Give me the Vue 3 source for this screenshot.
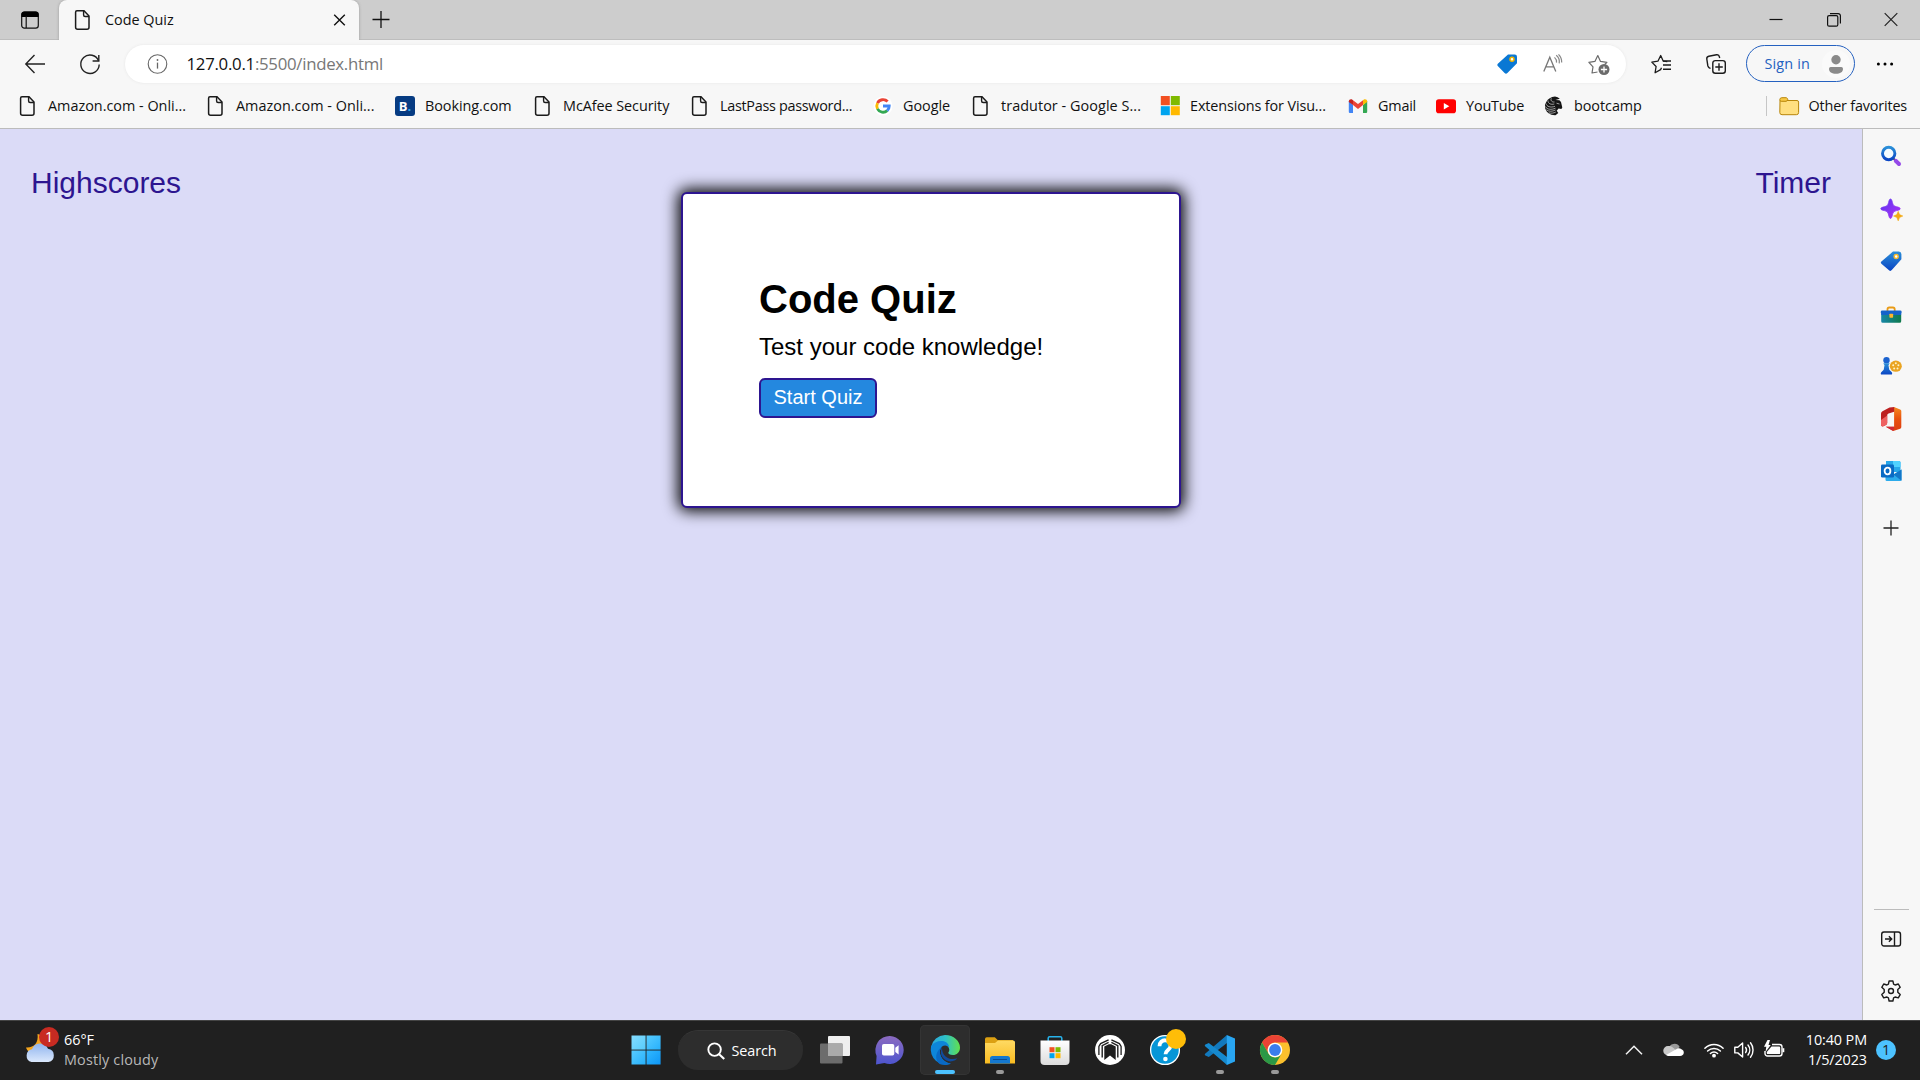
<script setup>
const doc = '<path d="M4 .8h7l5 5.2v11.2a2 2 0 0 1-2 2H4.6a2 2 0 0 1-2-2V2.2A1.4 1.4 0 0 1 4 .8z" fill="none" stroke="#1b1b1b" stroke-width="1.5"/><path d="M10.6 1v4a1.5 1.5 0 0 0 1.5 1.5H16" fill="none" stroke="#1b1b1b" stroke-width="1.4"/>'

const icons = {
  doc,
  tabs: '<rect x="1.7" y="2" width="16.6" height="16.2" rx="2.6" fill="none" stroke="#111" stroke-width="1.2"/><path d="M1.5 7V4.6A3 3 0 0 1 4.500 1.600h11a3 3 0 0 1 3 3V7z" fill="#000"/><path d="M6.200 6v12" stroke="#111" stroke-width="1.200"/>',
  close: '<path d="M4.200 4.700l10.600 10.600M14.800 4.700L4.200 15.300" stroke="#111" stroke-width="1.400"/>',
  plus: '<path d="M1.500 9.500h17M10 1v17" stroke="#111" stroke-width="1.300"/>',
  minimize: '<path d="M3.500 9.500h13" stroke="#111" stroke-width="1.200"/>',
  restore: '<rect x="3.600" y="5.600" width="10.200" height="10.600" rx="1.500" fill="none" stroke="#111" stroke-width="1.200"/><path d="M6 3.600h8.200a2.200 2.200 0 0 1 2.200 2.200V13.500" fill="none" stroke="#111" stroke-width="1.200"/>',
  winclose: '<path d="M3.700 3.200l12.600 12.600M16.300 3.200L3.700 15.800" stroke="#222" stroke-width="1.200"/>',
  back: '<path d="M20 10H1M9.500 1L.800 10l8.700 9" fill="none" stroke="#222" stroke-width="1.400"/>',
  refresh: '<path d="M18.600 7A9.200 9.200 0 1 0 19.200 10.500" fill="none" stroke="#222" stroke-width="1.400"/><path d="M18.800 1v6h-6.200" fill="none" stroke="#222" stroke-width="1.400"/>',
  info: '<circle cx="10.500" cy="10" r="9.300" fill="none" stroke="#666" stroke-width="1.100"/><path d="M10.500 8.600v6" stroke="#666" stroke-width="1.300"/><circle cx="10.500" cy="6" r=".9" fill="#666"/>',
  tag: '<path d="M11 .4h6.500A2.400 2.400 0 0 1 20 2.800v6.400L10.400 19a2 2 0 0 1-2.800 0L.8 12a1.600 1.600 0 0 1 0-2.300z" fill="#0a78d4"/><circle cx="15" cy="5.200" r="2" fill="#fff" stroke="#f0b400" stroke-width="1.500"/>',
  read: '<path d="M.8 17.600L6.800 3.200l6 14.400M2.900 12.800h7.800" fill="none" stroke="#777" stroke-width="1.300"/><path d="M11.500 3.400a6 6 0 0 1 2 5.200M13.200 1.300a8.500 8.500 0 0 1 3 8M15.500.4a11 11 0 0 1 3.200 8" fill="none" stroke="#888" stroke-width="1.200"/>',
  staradd: '<path d="M8.500 18L3 19l1-6.200L-.1 8.300l6-.9L8.800 1.600l2.700 5.800 6.400.9-2.200 2.200" fill="none" stroke="#6b6b6b" stroke-width="1.200" stroke-linejoin="round"/><circle cx="15" cy="15.500" r="5.500" fill="#6b6b6b"/><path d="M15 12.400v6.200M11.900 15.500h6.200" stroke="#fff" stroke-width="1.300"/>',
  favs: '<path d="M10.500 13.700L9.600 15.600 4.100 18.700l1-6.200L.8 8.100l6.100-.9L9.700 1.500l2.600 5.700 4 .5" fill="none" stroke="#1b1b1b" stroke-width="1.300" stroke-linejoin="round"/><path d="M12 7h8M12 11h8M12 15.200h8" stroke="#1b1b1b" stroke-width="1.400"/>',
  collect: '<rect x="6.800" y="6.600" width="12.500" height="12.700" rx="2.500" fill="none" stroke="#1b1b1b" stroke-width="1.400"/><path d="M13 9.200v7.500M9.300 13h7.500" stroke="#1b1b1b" stroke-width="1.400"/><path d="M4.500 14.500L3 13.600a3 3 0 0 1-1.200-1.900L.8 5a2.500 2.500 0 0 1 2-2.800L10.500.8a2.500 2.500 0 0 1 2.900 2l.3 1.200" fill="none" stroke="#1b1b1b" stroke-width="1.400"/>',
  dots: '<circle cx="3.400" cy="10" r="1.500"/><circle cx="10" cy="10" r="1.500"/><circle cx="16.600" cy="10" r="1.500"/>',
  google: '<circle cx="10" cy="10" r="9.500" fill="#fff"/><g fill="none" stroke-width="2.900"><path d="M14.600 5.600A6.200 6.200 0 0 0 4.500 7.100" stroke="#ea4335"/><path d="M4.500 7.100a6.300 6.300 0 0 0 0 5.800" stroke="#fbbc05"/><path d="M4.500 12.900a6.200 6.200 0 0 0 9.700 1.700" stroke="#34a853"/><path d="M10 10h6.200a6.200 6.200 0 0 1-2 4.600" stroke="#4285f4"/></g>',
  microsoft: '<path d="M.8 0h9v9.200h-9z" fill="#f25022"/><path d="M10.800 0h9v9.200h-9z" fill="#7fba00"/><path d="M.8 10.200h9v9h-9z" fill="#00a4ef"/><path d="M10.800 10.200h9v9h-9z" fill="#ffb900"/>',
  gmail: '<path d="M.8 5v10.500A1.300 1.300 0 0 0 2.100 17H5V9z" fill="#4285f4"/><path d="M19.200 5v10.500a1.300 1.300 0 0 1-1.300 1.500H15V9z" fill="#34a853"/><path d="M.8 5.300C.8 3.400 3 2.600 4.400 3.700L5 4.200V9L.8 6z" fill="#c5221f"/><path d="M19.200 5.300c0-1.900-2.200-2.700-3.600-1.600l-.6.500V9l4.200-3z" fill="#fbbc04"/><path d="M5 4.200l5 3.900 5-3.900V9l-5 4-5-4z" fill="#ea4335"/>',
  youtube: '<rect x="0" y="3.200" width="20" height="14" rx="2.800" fill="#f00"/><path d="M7.800 7v6.400l5.500-3.200z" fill="#fff"/>',
  knight: '<path d="M11 .5C7 1 3.800 2.600 2.400 5.800L1 8.600l.2 4C2.500 16.500 6 19.500 11.500 19.300l2.800-2.200-1.600-2.300 1.900-2.400 2.800.5.900-1.500-1.300-5.500-1.600-1.600-4-.3 4.400-1.200A8 8 0 0 0 11 .5z" fill="#151515"/><g fill="none" stroke="#f7f7f7" stroke-width=".6"><path d="M2 7.500c.5 3 4.500 4.500 9 2.800"/><path d="M1.300 10.500c1.800 3.200 6 3.500 10.200 1.700"/><path d="M2.300 13.800c2.500 2 6 1.800 9.200.2"/><path d="M4.800 16.800c2.300.8 4.800.4 7-.8"/><path d="M4 4.500C3.800 7.500 7 9 10.300 8"/><path d="M7.300 2.200C6.200 4.500 8 6.300 10.500 6"/><path d="M12.500 7.200l3 .8"/></g>',
  folder: '<path d="M1 4.500h17a1.600 1.600 0 0 1 1.600 1.600v10.400A2.200 2.200 0 0 1 17.400 18.700H3A2.200 2.200 0 0 1 .8 16.500z" fill="#ffdf80" stroke="#b8860b" stroke-width="1"/><path d="M.8 3.500A2 2 0 0 1 2.800 1.700h4.500l1.700 1.600L7.500 5.300H2.200A1.500 1.500 0 0 1 .8 3.500z" fill="#f8c945" stroke="#b8860b" stroke-width="1"/>',
  search: '<path d="M12.600 12.600l2.800 2.800" stroke="#444" stroke-width="2"/><path d="M14.800 14.800l3.200 3.200" stroke="#9548e8" stroke-width="4" stroke-linecap="round"/><circle cx="7.700" cy="7.500" r="6.200" fill="#f4fbff" stroke="url(#gBlue)" stroke-width="2.900"/>',
  sparkle: '<path d="M9.500 0c1 0 1.400 1.400 1.900 3.500.7 2.800 1.500 3.600 4.300 4.300 2.100.5 3.500.9 3.500 1.900s-1.400 1.400-3.500 1.900c-2.800.7-3.600 1.500-4.300 4.300-.5 2.100-.9 3.500-1.900 3.500s-1.400-1.400-1.900-3.500c-.7-2.800-1.500-3.600-4.300-4.300C1.200 11.100-.2 10.700-.2 9.700s1.400-1.400 3.500-1.900c2.800-.7 3.600-1.500 4.300-4.300C8.100 1.400 8.500 0 9.500 0z" fill="url(#gPurple)" stroke="url(#gPurple)" stroke-width=".8"/><path d="M17.200 12.300l1.400 3.300 3.300 1.400-3.300 1.500-1.400 3.400-1.400-3.400-3.300-1.500 3.300-1.400z" fill="#f3aa17" stroke="#f3aa17" stroke-width=".5"/>',
  tag3d: '<path d="M12 .6l5.800-.1A2.600 2.600 0 0 1 20.400 3v5.200l-9.600 10.900a2 2 0 0 1-2.800.2L.4 12.700a1.500 1.500 0 0 1 0-2.200z" fill="url(#gBlue)"/><circle cx="15.200" cy="5.400" r="2" fill="#fff" stroke="#f5b92e" stroke-width="1.500"/>',
  toolbox: '<g transform="translate(0 1)"><path d="M6.500 6V4.300A1.800 1.800 0 0 1 8.300 2.500h3.600a1.800 1.800 0 0 1 1.800 1.800V6" fill="none" stroke="#e99b16" stroke-width="1.800"/><path d="M.2 9h20v7.300a1.500 1.500 0 0 1-1.500 1.500h-17A1.500 1.500 0 0 1 .2 16.300z" fill="url(#gTeal)"/><path d="M-.3 6.900A1.500 1.500 0 0 1 1.200 5.500h18a1.500 1.500 0 0 1 1.500 1.400L20 10H.4z" fill="#1563ca"/><rect x="8.400" y="8.700" width="3.700" height="4" rx=".6" fill="#ffb52b"/></g>',
  games: '<g transform="translate(0 .6)"><ellipse cx="14.800" cy="9.600" rx="6" ry="5.600" fill="#eaa421"/><g fill="#fff2c8"><circle cx="14.800" cy="6.600" r="1"/><circle cx="12.200" cy="8.600" r="1"/><circle cx="17.400" cy="8.600" r="1"/><circle cx="13.200" cy="11.800" r="1"/><circle cx="16.500" cy="11.800" r="1"/></g><circle cx="5.500" cy="3.600" r="3.200" fill="#1b62cf"/><path d="M2.300 6.600h6.400l-1.200 2 .8 4.600 2.500 2.400c.7 1.600.3 2.400-.5 2.400H.7c-1 0-1.300-1-.5-2.400l2.500-2.400.8-4.600z" fill="url(#gBlue)"/></g>',
  office: '<path d="M13 -2l6.200 2.400a1.800 1.800 0 0 1 1.100 1.700v16a1.800 1.800 0 0 1-1.100 1.700L12.200 22 4.800 17.800h8.300V2.800z" fill="url(#gOrange)"/><path d="M11-1.800L13.200-2v4.800L7.500 4.500a2 2 0 0 0-1.300 1.900V14a2.500 2.500 0 0 1-1.300 2.100l-2 1C1.400 17.900 0 17 0 15.400V4.800A3 3 0 0 1 1.500 2.200L8.500-1.400z" fill="#bd2020"/><path d="M6.200 6.400V14a2.500 2.500 0 0 1-1.300 2.100l-2 1C1.400 17.900 0 17 0 15.400V11z" fill="#ef6262"/><path d="M4.800 17.800h8.300l-.9 4.200z" fill="#cf2939"/>',
  outlook: '<path d="M5 0h13a1.500 1.500 0 0 1 1.500 1.500V11H5z" fill="#28a8ea"/><path d="M12 0h6a1.500 1.500 0 0 1 1.500 1.500V6H12z" fill="#50d2ff"/><path d="M4.500 9.500l8 4 8-5v10.300a1.300 1.300 0 0 1-1.300 1.300H5.800a1.300 1.300 0 0 1-1.300-1.300z" fill="#2cabeb"/><path d="M20.500 8.500v11.300L12.500 13.500z" fill="#1477c8"/><rect x="0" y="3.500" width="13" height="13" rx="1.300" fill="#0a6ac4"/><ellipse cx="6.500" cy="10" rx="2.900" ry="3.300" fill="none" stroke="#fff" stroke-width="1.800"/>',
  thinplus: '<path d="M2.500 10h15M10 2.500v15" stroke="#222" stroke-width="1.300"/>',
  panel: '<rect x=".7" y="3" width="18.800" height="14" rx="2.200" fill="none" stroke="#1b1b1b" stroke-width="1.400"/><path d="M13.500 3v14M4 10h6.500M7.900 7.300l2.800 2.700-2.800 2.700" fill="none" stroke="#1b1b1b" stroke-width="1.400"/>',
  gear: '<path d="M8.100 0h3.800l.7 3.200 1.500.8 3.200-1 1.900 3.300L16.800 8.500v2.800l2.400 2.300-1.900 3.300-3.200-.9-1.500.9-.7 3.100H8.100l-.7-3.100-1.500-.9-3.200.9L.8 13.600l2.400-2.300V8.500L.8 6.300 2.700 3l3.200 1 1.500-.8z" fill="none" stroke="#1b1b1b" stroke-width="1.400" stroke-linejoin="round"/><circle cx="10" cy="10" r="2.500" fill="none" stroke="#1b1b1b" stroke-width="1.400"/>',
  start: '<path d="M0 0h14.100v14.100H0z" fill="url(#gWin)"/><path d="M15 0h14.100v14.100H15z" fill="url(#gWin2)"/><path d="M0 15h14.100v14H0z" fill="url(#gWin2)"/><path d="M15 15h14.100v14H15z" fill="url(#gWin3)"/>',
  taskview: '<rect x="8" y="1" width="22" height="20" rx="1" fill="#efefef"/><rect x="0" y="8.500" width="22.500" height="20" rx="1" fill="#6c6c6c"/><path d="M8 8.500h14.500V21H8z" fill="#aaa"/>',
  chat: '<path d="M15 1a14 14 0 1 1-5.500 27L1 29.500l.6-8.500A14.200 14.200 0 0 1 15 1z" fill="url(#gChat)"/><rect x="7" y="9" width="12.300" height="11.600" rx="1.800" fill="#fff"/><path d="M20.300 12.700l3.300-2.500v9.300l-3.300-2.500z" fill="#fff"/>',
  edge: '<path d="M1 12A15 15 0 0 1 15 0c9 0 15 6.300 15 12.400 0 4.800-3.400 7.600-7 7.600-3.400 0-4.700-1.400-4.700-2.200 0-.6 1-1 1-3 0-2.600-2.700-5.700-7.300-5.700C6.600 9.100 2.600 12 1 12z" fill="url(#gEdgeTop)"/><path d="M1 11.500C3 7.900 7 6 11.500 6c4.300 0 7.300 2.600 7.800 6.500-2-3-8-3.300-9.300 2.500-1.200 6.300 3.500 12.400 10.500 13.600A15 15 0 0 1 1 11.500z" fill="#0d86da"/><path d="M12 12.500C8.300 20 14.400 27.300 22 26.300c2.300-.3 4.300-1.500 5.300-3-6.300 2.300-15.500-.5-15.300-10.800z" fill="#114a9b"/><path d="M9.900 15.500C9.500 22 14 28 21 28.400 17.400 30.400 13 30.300 9.600 28.900 4.500 25 5 16.500 12 12z" fill="#0969c4"/>',
  explorer: '<path d="M0 4A1.800 1.800 0 0 1 1.800 2.200h8L12.700 5H28v5H0z" fill="#dca012"/><path d="M0 8h10l3-2.500h15.200A1.800 1.800 0 0 1 30 7.300v21.200H0z" fill="url(#gFolder)"/><path d="M5 28.500v-5A2.500 2.500 0 0 1 7.500 21h15A2.500 2.500 0 0 1 25 23.500v5z" fill="#1478d0"/><path d="M8.500 24.500h13" stroke="#0a4c93" stroke-width="1.200" stroke-linecap="round"/>',
  store: '<path d="M8.200 7V3A1.400 1.400 0 0 1 9.600 1.700h10.800A1.400 1.400 0 0 1 21.800 3v4" fill="none" stroke="#27b3ec" stroke-width="1.500"/><path d="M.5 5.500h29V26a4 4 0 0 1-4 4h-21a4 4 0 0 1-4-4z" fill="url(#gStore)"/><path d="M9.500 12.200h5v5h-5z" fill="#f25022"/><path d="M15.500 12.200h5v5h-5z" fill="#7fba00"/><path d="M9.500 18.200h5v5h-5z" fill="#00a4ef"/><path d="M15.500 18.200h5v5h-5z" fill="#ffb900"/>',
  predator: '<circle cx="15" cy="15" r="15" fill="#fff"/><path d="M13.600 4.800L5.600 8.600 3.900 11.500V20" fill="none" stroke="#1e1e1e" stroke-width="1.300"/><path d="M16.400 4.800l8 3.800 1.700 2.900V20" fill="none" stroke="#1e1e1e" stroke-width="1.300"/><path d="M13.600 7.300L7.200 10.600V22.500" fill="none" stroke="#1e1e1e" stroke-width="1.400"/><path d="M16.400 7.300l6.400 3.300V22.500" fill="none" stroke="#1e1e1e" stroke-width="1.400"/><path d="M9.300 11.600L13.800 9.200h2.400l4.500 2.400V25L15 20.600 9.300 25z" fill="#1e1e1e"/>',
  help: '<circle cx="15" cy="15" r="14.400" fill="#0796d7" stroke="#fff" stroke-width="1.300"/><path d="M9.500 11.200c0-8 11.500-7.800 11 0-.3 3.800-5 4-5 8" fill="none" stroke="#fff" stroke-width="3.800"/><circle cx="15.400" cy="24" r="2.300" fill="#fff"/><circle cx="26" cy="4" r="10" fill="#ffbd08"/>',
  vscode: '<path d="M22 0v8L3.800 22 .4 20.400c-.8-.6-.8-1.400 0-2z" fill="#1279bd"/><path d="M22 30v-8L3.800 8 .4 9.600c-.8.600-.8 1.400 0 2z" fill="#1689ce"/><path d="M21.800 0L30 3.600v22.800L21.800 30z" fill="#29a6f2"/>',
  chrome: '<circle cx="15" cy="15" r="15" fill="#fbc02d"/><path d="M2 7.500A15 15 0 0 1 28 7.500H15a7.500 7.500 0 0 0-6.600 11z" fill="#ea4335"/><path d="M2 7.500a15 15 0 0 0 13 22.500l6.600-11.300a7.500 7.500 0 0 1-13 0z" fill="#2b9846"/><circle cx="15" cy="15" r="7.300" fill="#fff"/><circle cx="15" cy="15" r="5.900" fill="#3b7ded"/>',
  lens: '<circle cx="8" cy="8" r="6.600" fill="none" stroke="#fff" stroke-width="2"/><path d="M12.800 12.800l5.400 5.200" stroke="#fff" stroke-width="2.200"/>',
  chevron: '<path d="M2 14.200l8-8 8 8" fill="none" stroke="#f3f3f3" stroke-width="1.500"/>',
  cloud: '<path d="M4.500 9A6 6 0 0 1 15.700 7L9 13z" fill="#999"/><path d="M4 15.500A4 4 0 0 1 4 6c3-.5 5 1 8 4.500L6 15.500z" fill="#c9c9c9"/><path d="M2 15L14 8.200a4.500 4.500 0 0 1 3.500 1C21 10.500 20.500 15.900 16 15.900H4z" fill="#fff"/>',
  wifi: '<g fill="none" stroke="#fff" stroke-width="1.500" stroke-linecap="round"><path d="M.9 8.200a13 13 0 0 1 18.200 0M3.600 11a9.200 9.200 0 0 1 12.800 0M6.400 13.500a5.400 5.400 0 0 1 7.200 0"/></g><circle cx="10" cy="15.700" r="1.900" fill="#fff"/>',
  sound: '<g fill="none" stroke="#fff" stroke-width="1.400" stroke-linecap="round" stroke-linejoin="round"><path d="M.8 7.200h3L8.600 3v14L3.800 12.900h-3z"/><path d="M11.600 7.400a4.500 4.500 0 0 1 0 5.200M14 5a8 8 0 0 1 0 10M16.500 2.800a11.500 11.500 0 0 1 0 14.400"/></g>',
  battery: '<path d="M8 4.500h7.500A2.500 2.500 0 0 1 18 7v6.500a2.500 2.500 0 0 1-2.500 2.500h-12A2.500 2.500 0 0 1 1 13.500V11" fill="none" stroke="#fff" stroke-width="1.400"/><path d="M7.500 6.500H15A1.200 1.200 0 0 1 16.200 7.700v5.200a1.200 1.200 0 0 1-1.200 1.200H4a1.200 1.200 0 0 1-1.200-1.200V12z" fill="#fff"/><path d="M18.500 8.200h1.800v4h-1.800z" fill="#fff"/><path d="M3.500 0L0 6.800h2.300L1.500 12l5.200-7H4.500L6 0z" fill="#fff"/>',
  weather: '<path d="M12.500 0c1.200 9-3.500 14-11.500 13.500C3 21 15 22 20 13 22 6 18 1 12.500 0z" fill="#f4a51f"/><path d="M6.500 28A6.500 6.500 0 0 1 7 15.300 8.500 8.500 0 0 1 23 14.800 6.700 6.700 0 0 1 23.500 28z" fill="url(#gCloud)"/>'
}

const bookmarks = [
  { icon: 'doc', label: 'Amazon.com - Onli...', width: 188, track: 0 },
  { icon: 'doc', label: 'Amazon.com - Onli...', width: 189, track: 0.02 },
  { icon: 'booking', label: 'Booking.com', width: 138, track: -0.05 },
  { icon: 'doc', label: 'McAfee Security', width: 157, track: -0.06 },
  { icon: 'doc', label: 'LastPass password...', width: 183, track: -0.29 },
  { icon: 'google', label: 'Google', width: 98, track: -0.05 },
  { icon: 'doc', label: 'tradutor - Google S...', width: 189, track: 0.06 },
  { icon: 'microsoft', label: 'Extensions for Visu...', width: 188, track: -0.12 },
  { icon: 'gmail', label: 'Gmail', width: 88, track: -0.2 },
  { icon: 'youtube', label: 'YouTube', width: 108, track: -0.15 },
  { icon: 'knight', label: 'bootcamp', width: 110, track: -0.05 }
]
const sidebar = ['search', 'sparkle', 'tag3d', 'toolbox', 'games', 'office', 'outlook']
const apps = [
  { icon: 'taskview' },
  { icon: 'chat' },
  { icon: 'edge', active: true },
  { icon: 'explorer', open: true },
  { icon: 'store' },
  { icon: 'predator' },
  { icon: 'help' },
  { icon: 'vscode', open: true },
  { icon: 'chrome', open: true }
]
</script>

<template>
  <div class="screen">
    <svg class="defs" width="0" height="0">
      <defs>
        <linearGradient id="gBlue" x1="0" y1="0" x2="0" y2="1"><stop offset="0" stop-color="#2b8fd8" /><stop offset="1" stop-color="#0a45c4" /></linearGradient>
        <linearGradient id="gPurple" x1="0" y1="0" x2="1" y2="1"><stop offset="0" stop-color="#5a35f0" /><stop offset="1" stop-color="#b032f5" /></linearGradient>
        <linearGradient id="gTeal"><stop offset="0" stop-color="#1787a8" /><stop offset="1" stop-color="#107a4c" /></linearGradient>
        <linearGradient id="gOrange" x1="0" y1="0" x2="0" y2="1"><stop offset="0" stop-color="#f68b1f" /><stop offset=".5" stop-color="#e8500e" /><stop offset="1" stop-color="#dc3e12" /></linearGradient>
        <linearGradient id="gWin" x1="0" y1="0" x2="1" y2="1"><stop offset="0" stop-color="#84dcff" /><stop offset="1" stop-color="#56cbfb" /></linearGradient>
        <linearGradient id="gWin2" x1="0" y1="0" x2="1" y2="1"><stop offset="0" stop-color="#58ccff" /><stop offset="1" stop-color="#27b0fb" /></linearGradient>
        <linearGradient id="gWin3" x1="0" y1="0" x2="1" y2="1"><stop offset="0" stop-color="#31b9ff" /><stop offset="1" stop-color="#0e96f5" /></linearGradient>
        <linearGradient id="gChat" x1="0" y1="0" x2="0" y2="1"><stop offset="0" stop-color="#8c6bc0" /><stop offset="1" stop-color="#4d55cf" /></linearGradient>
        <linearGradient id="gEdgeTop"><stop offset="0" stop-color="#2aa6e0" /><stop offset=".5" stop-color="#2ec1c8" /><stop offset="1" stop-color="#62e04c" /></linearGradient>
        <linearGradient id="gFolder" x1="0" y1="0" x2="0" y2="1"><stop offset="0" stop-color="#ffda63" /><stop offset="1" stop-color="#f9bb20" /></linearGradient>
        <linearGradient id="gStore" x1="0" y1="0" x2="0" y2="1"><stop offset="0" stop-color="#fff" /><stop offset="1" stop-color="#dcdcdc" /></linearGradient>
        <linearGradient id="gCloud" x1="0" y1="0" x2="0" y2="1"><stop offset="0" stop-color="#8fb4ee" /><stop offset="1" stop-color="#dbe8fc" /></linearGradient>
      </defs>
    </svg>

    <div class="tabstrip">
      <div class="tab-actions"><svg class="i20" viewBox="0 0 20 20" v-html="icons.tabs" /></div>
      <div class="tab">
        <svg class="i20" viewBox="0 0 20 20" v-html="icons.doc" />
        <span class="tab-title">Code Quiz</span>
        <svg class="i20" viewBox="0 0 20 20" v-html="icons.close" />
      </div>
      <div class="new-tab"><svg class="i20" viewBox="0 0 20 20" v-html="icons.plus" /></div>
      <div class="window-controls">
        <svg class="i20" viewBox="0 0 20 20" v-html="icons.minimize" />
        <svg class="i20" viewBox="0 0 20 20" v-html="icons.restore" />
        <svg class="i20" viewBox="0 0 20 20" v-html="icons.winclose" />
      </div>
    </div>

    <div class="toolbar">
      <div class="cell"><svg class="i20" viewBox="0 0 20 20" v-html="icons.back" /></div>
      <div class="cell"><svg class="i20" viewBox="0 0 20 20" v-html="icons.refresh" /></div>
      <div class="address">
        <svg class="i20" viewBox="0 0 20 20" v-html="icons.info" />
        <span class="url"><b>127.0.0.1</b>:5500/index.html</span>
        <svg class="i20" viewBox="0 0 20 20" v-html="icons.tag" />
        <svg class="i20" viewBox="0 0 20 20" v-html="icons.read" />
        <svg class="i20" viewBox="0 0 20 20" v-html="icons.staradd" />
      </div>
      <div class="cell after"><svg class="i20" viewBox="0 0 20 20" v-html="icons.favs" /></div>
      <div class="cell"><svg class="i20" viewBox="0 0 20 20" v-html="icons.collect" /></div>
      <div class="signin">
        <span>Sign in</span>
        <svg width="28" height="28" viewBox="0 0 28 28"><circle cx="14" cy="14" r="14" fill="#fafafa" /><circle cx="14" cy="9.700" r="4.700" fill="#8a8a8a" /><path d="M7 18.700A1.700 1.700 0 0 1 8.700 17h10.600a1.700 1.700 0 0 1 1.700 1.700c0 3.600-3 5-7 5s-7-1.400-7-5z" fill="#8a8a8a" /></svg>
      </div>
      <div class="cell"><svg class="i20" viewBox="0 0 20 20" v-html="icons.dots" /></div>
    </div>

    <div class="bookmarks">
      <div v-for="(b, i) in bookmarks" :key="i" class="bookmark" :style="{ width: b.width + 'px', letterSpacing: b.track + 'px' }">
        <span v-if="b.icon === 'booking'" class="booking">B<i>.</i></span>
        <svg v-else class="i20" viewBox="0 0 20 20" v-html="icons[b.icon]" />
        <span>{{ b.label }}</span>
      </div>
      <div class="bookmark other">
        <svg class="i20" viewBox="0 0 20 20" v-html="icons.folder" />
        <span>Other favorites</span>
      </div>
    </div>

    <div class="body">
      <main class="page">
        <header class="page-head">
          <a>Highscores</a>
          <span>Timer</span>
        </header>
        <section class="card">
          <h1>Code Quiz</h1>
          <p>Test your code knowledge!</p>
          <button>Start Quiz</button>
        </section>
      </main>
      <aside class="sidebar">
        <div v-for="s in sidebar" :key="s" class="side-cell"><svg class="i20" viewBox="0 0 20 20" v-html="icons[s]" /></div>
        <div class="side-cell add"><svg class="i20" viewBox="0 0 20 20" v-html="icons.thinplus" /></div>
        <div class="side-bottom">
          <div class="side-cell"><svg class="i20" viewBox="0 0 20 20" v-html="icons.panel" /></div>
          <div class="side-cell"><svg class="i20" viewBox="0 0 20 20" v-html="icons.gear" /></div>
        </div>
      </aside>
    </div>

    <footer class="taskbar">
      <div class="weather">
        <div class="weather-icon">
          <svg width="30" height="30" viewBox="0 0 30 30" v-html="icons.weather" />
          <span class="alert">1</span>
        </div>
        <div class="lines"><span>66°F</span><span class="dim">Mostly cloudy</span></div>
      </div>
      <div class="apps">
        <div class="app"><svg width="30" height="30" viewBox="-.5 -.5 30 30" v-html="icons.start" /></div>
        <div class="search"><svg width="18" height="18" viewBox="0 0 19 19" v-html="icons.lens" /><span>Search</span></div>
        <div v-for="a in apps" :key="a.icon" class="app" :class="{ active: a.active, open: a.open }">
          <svg width="30" height="30" viewBox="0 0 30 30" v-html="icons[a.icon]" />
        </div>
      </div>
      <div class="tray">
        <svg class="i20 chevron" viewBox="0 0 20 20" v-html="icons.chevron" />
        <svg class="i20 cloud" viewBox="0 0 20 20" v-html="icons.cloud" />
        <svg class="i20" viewBox="0 0 20 20" v-html="icons.wifi" />
        <svg class="i20" viewBox="0 0 20 20" v-html="icons.sound" />
        <svg class="i20" viewBox="0 0 20 20" v-html="icons.battery" />
        <div class="lines clock"><span>10:40 PM</span><span>1/5/2023</span></div>
        <span class="count">1</span>
      </div>
    </footer>
  </div>
</template>

<style>
body { margin: 0; overflow: hidden; }
</style>

<style scoped>
* { box-sizing: border-box; }
.screen { width: 1920px; height: 1080px; display: flex; flex-direction: column; background: #f7f7f7; font-family: "Open Sans", "Noto Sans", sans-serif; font-size: 14.4px; color: #111; white-space: nowrap; overflow: hidden; }
.defs { position: absolute; }
svg { display: block; overflow: visible; flex: none; }
.i20 { width: 20px; height: 20px; }

.tabstrip { height: 40px; display: flex; background: #cdcdcd; box-shadow: inset 0 -1px #bdbdbd; flex: none; }
.tab-actions { width: 59px; display: flex; align-items: center; padding: 0 0 0 20px; }
.tab { width: 300px; background: #f7f7f7; border-radius: 8px 8px 0 0; display: flex; align-items: center; padding: 0 9.500px 0 14px; box-shadow: 0 0 3px #999; clip-path: inset(0 -4px 0 -4px); }
.tab-title { flex: 1; margin-left: 12px; padding-bottom: 2px; }
.new-tab { width: 43px; display: flex; align-items: center; justify-content: flex-end; padding-right: 11px; }
.window-controls { margin-left: auto; display: flex; align-items: center; gap: 37.500px; padding-right: 19px; }

.toolbar { height: 47px; display: flex; align-items: center; padding-left: 7px; flex: none; }
.cell { width: 55px; display: flex; justify-content: center; }
.address { width: 1501px; height: 38px; margin-left: 8px; border-radius: 19px; background: #fff; display: flex; align-items: center; padding: 0 17px 0 22px; box-shadow: 0 0 3px #e6e6e6; }
.url { flex: 1; margin-left: 19.500px; font-size: 16.800px; letter-spacing: -.27px; color: #777; }
.url b { font-weight: 400; color: #111; }
.address .i20 + .i20 { margin-left: 26px; }
.after { margin-left: 7px; }
.signin { width: 109px; height: 37px; margin-left: 3px; margin-right: 2px; border: 1.500px solid #2561c0; border-radius: 19px; display: flex; align-items: center; justify-content: space-between; padding: 0 4px 0 17.500px; color: #2561c0; letter-spacing: .15px; }

.bookmarks { height: 42px; display: flex; align-items: center; padding: 0 12px 4px 18px; border-bottom: 1px solid #bcbcbc; flex: none; }
.bookmark { display: flex; align-items: center; gap: 10px; flex: none; }
.booking { width: 20px; height: 20px; border-radius: 3px; background: #063b82; color: #fff; font: bold 13px/20px "Open Sans", sans-serif; text-align: center; }
.booking i { color: #2aa9ee; font-style: normal; }
.other { margin-left: auto; border-left: 1px solid #c6c6c6; padding: 0 1px 0 12px; letter-spacing: -.18px; }

.body { flex: 1; display: flex; min-height: 0; }
.page { flex: 1; background: #dbdbf7; border-right: 1px solid #bcbcbc; font-family: "Liberation Sans", Arial, sans-serif; }
.page-head { height: 63px; padding: 37px 31px 0; display: flex; justify-content: space-between; font-size: 30px; line-height: 34px; color: #2d1590; }
.card { width: 500px; height: 316px; margin: 0 auto; background: #fff; border: 2px solid #2d1590; border-radius: 6px; box-shadow: 0 0 15px 3px #000; padding: 81px 76px 0; display: flex; flex-direction: column; align-items: flex-start; color: #000; }
.card h1 { margin: 0; font-size: 40px; line-height: 48px; }
.card p { margin: 7px 0 0; font-size: 24px; line-height: 34px; }
.card button { margin: 14px 0 0; width: 118px; height: 40px; padding: 0 0 1px; border: 2px solid #2d1590; border-radius: 6px; background: #2488df; color: #fff; font: 20px "Liberation Sans", Arial, sans-serif; }

.sidebar { width: 57px; display: flex; flex-direction: column; padding: 1px 1px 0 0; }
.side-cell { height: 52.500px; display: flex; align-items: center; justify-content: center; }
.add { margin-top: 4px; }
.side-bottom { margin: auto 10px 2.500px 11px; border-top: 1px solid #bcbcbc; padding-top: 2.500px; }
.side-bottom .side-cell { padding-right: 1px; }

.taskbar { height: 60px; background: #202020; border-top: 1px solid #444; display: flex; color: #fff; flex: none; }
.weather { width: 618.500px; display: flex; padding: 9px 0 0 25px; }
.weather-icon { position: relative; width: 39px; padding-top: 4px; }
.alert { position: absolute; left: 14px; top: -3px; width: 20px; height: 20px; border-radius: 50%; background: #c82b22; text-align: center; line-height: 20px; }
.lines { display: flex; flex-direction: column; line-height: 20px; }
.dim { color: #b8b8b8; letter-spacing: .17px; }
.apps { display: flex; align-items: center; padding-bottom: 1px; }
.app { position: relative; width: 50px; height: 50px; margin: 0 2.500px; display: flex; align-items: center; justify-content: center; border-radius: 5px; }
.app.active { background: #2d2d2d; box-shadow: inset 0 0 0 1px #343434; }
.app.active::after, .app.open::after { content: ""; position: absolute; bottom: 1px; left: 21px; width: 8px; height: 4px; border-radius: 2px; background: #999; }
.app.active::after { left: 15px; width: 20px; background: #4cc2ff; }
.search { width: 125px; height: 40px; margin: 0 4.500px; border-radius: 20px; background: #2d2d2d; border-top: 1px solid #363636; display: flex; align-items: center; gap: 7px; padding-left: 28.500px; letter-spacing: -.1px; }
.tray { margin-left: auto; display: flex; align-items: center; gap: 10px; padding: 0 24px 1px 0; }
.chevron { margin-right: 10px; }
.cloud { margin-right: 10px; }
.clock { text-align: right; width: 73px; margin-right: -1px; letter-spacing: -.1px; padding-bottom: 1px; }
.count { width: 20px; height: 20px; border-radius: 50%; background: #4cc2ff; color: #222; text-align: center; line-height: 20px; }
</style>
